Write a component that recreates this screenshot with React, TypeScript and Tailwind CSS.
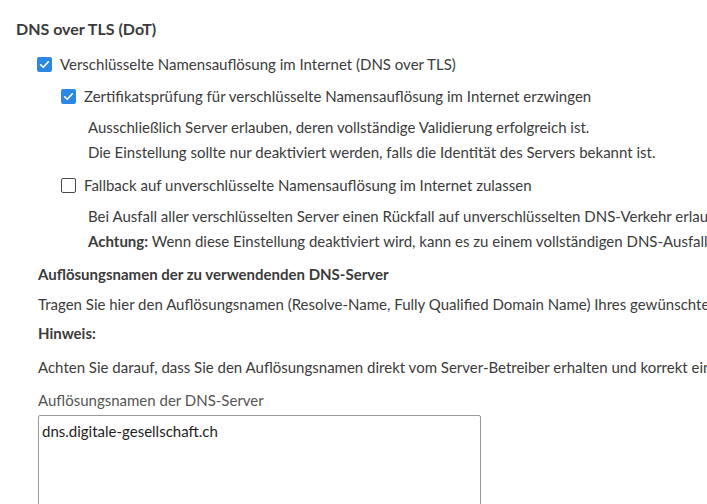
import React, { useState } from 'react';

const Check: React.FC<{ checked: boolean; onToggle: () => void }> = ({ checked, onToggle }) => (
  <button
    type="button"
    onClick={onToggle}
    className={
      checked
        ? 'flex h-[15px] w-[15px] shrink-0 items-center justify-center rounded-[2px] bg-[#2c88e0]'
        : 'flex h-[15px] w-[15px] shrink-0 items-center justify-center rounded-[2px] border border-[#4a4a4a] bg-white'
    }
  >
    {checked && (
      <svg viewBox="0 0 16 16" className="h-[13px] w-[13px]" fill="none">
        <path d="M3.2 8.3 L6.5 11.4 L12.8 4.6" stroke="white" strokeWidth="2" strokeLinecap="round" strokeLinejoin="round" />
      </svg>
    )}
  </button>
);

const App: React.FC = () => {
  const [dot, setDot] = useState(true);
  const [verify, setVerify] = useState(true);
  const [fallback, setFallback] = useState(false);

  return (
    <div className="h-[504px] w-[707px] overflow-hidden whitespace-nowrap bg-white font-['Lato',sans-serif] text-[15px] text-[#3b3b3b]">
      <div className="pl-4 pt-[18px] text-[16px] font-bold leading-[22px]">DNS over TLS (DoT)</div>

      <div className="mt-[13px] flex items-center gap-2 pl-[37px] leading-[22px]">
        <Check checked={dot} onToggle={() => setDot(!dot)} />
        <span>Verschlüsselte Namensauflösung im Internet (DNS over TLS)</span>
      </div>

      <div className="pl-[61px]">
        <div className="mt-[10px] flex items-center gap-2 leading-[22px]">
          <Check checked={verify} onToggle={() => setVerify(!verify)} />
          <span>Zertifikatsprüfung für verschlüsselte Namensauflösung im Internet erzwingen</span>
        </div>
        <div className="mt-2 pl-[27px] leading-[25px]">
          <div>Ausschließlich Server erlauben, deren vollständige Validierung erfolgreich ist.</div>
          <div>Die Einstellung sollte nur deaktiviert werden, falls die Identität des Servers bekannt ist.</div>
        </div>

        <div className="mt-[9px] flex items-center gap-2 leading-[22px]">
          <Check checked={fallback} onToggle={() => setFallback(!fallback)} />
          <span>Fallback auf unverschlüsselte Namensauflösung im Internet zulassen</span>
        </div>
        <div className="mt-2 pl-[27px] leading-[25px]">
          <div>Bei Ausfall aller verschlüsselten Server einen Rückfall auf unverschlüsselten DNS-Verkehr erlauben.</div>
          <div>
            <span className="font-bold">Achtung:</span> Wenn diese Einstellung deaktiviert wird, kann es zu einem vollständigen DNS-Ausfall kommen.
          </div>
        </div>
      </div>

      <div className="pl-[38px]">
        <div className="mt-[9px] font-bold leading-[22px]">Auflösungsnamen der zu verwendenden DNS-Server</div>
        <div className="mt-2 leading-[22px]">
          Tragen Sie hier den Auflösungsnamen (Resolve-Name, Fully Qualified Domain Name) Ihres gewünschten DNS-Servers ein.
        </div>
        <div className="mt-[7px] font-bold leading-[22px]">Hinweis:</div>
        <div className="mt-3 leading-[22px]">
          Achten Sie darauf, dass Sie den Auflösungsnamen direkt vom Server-Betreiber erhalten und korrekt eingeben.
        </div>
        <div className="mt-[11px] leading-[22px] text-[#555]">Auflösungsnamen der DNS-Server</div>
        <textarea
          defaultValue="dns.digitale-gesellschaft.ch"
          className="mt-1 block h-[110px] w-[443px] resize-none rounded-[2px] border border-[#9a9a9a] px-[3px] py-[4px] text-[15px] leading-[22px] text-[#1e1e1e] outline-none"
        />
      </div>
    </div>
  );
};

export default App;
